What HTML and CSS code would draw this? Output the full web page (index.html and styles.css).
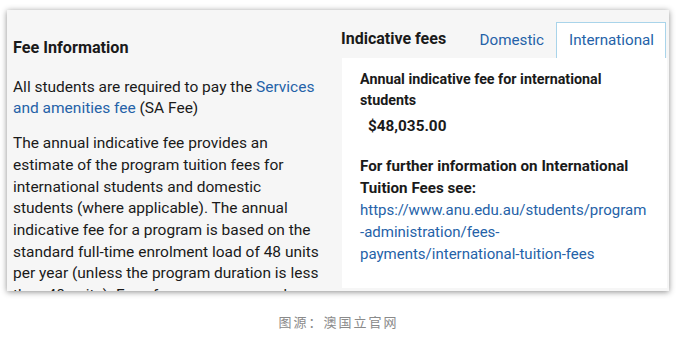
FILE: index.html
```html
<!DOCTYPE html>
<html lang="en">
<head>
    <meta charset="UTF-8">
    <meta name="viewport" content="width=device-width, initial-scale=1.0">
    <title>Fee Information</title>
    <link rel="stylesheet" href="styles.css">
</head>
<body>
    <div class="shot">
        <div class="fee-info">
            <h2>Fee Information</h2>
            <p>All students are required to pay the <a href="#">Services and amenities fee</a> (SA Fee)</p>
            <p>The annual indicative fee provides an estimate of the program tuition fees for international students and domestic students (where applicable). The annual indicative fee for a program is based on the standard full-time enrolment load of 48 units per year (unless the program duration is less than 48 units). Fees for your program where</p>
        </div>

        <div class="fees">
            <div class="tab-row">
                <h3>Indicative fees</h3>
                <div class="tabs">
                    <a href="#" class="tab">Domestic</a>
                    <a href="#" class="tab active">International</a>
                </div>
            </div>
            <div class="panel">
                <p class="label">Annual indicative fee for international students</p>
                <p class="amount">$48,035.00</p>
                <p class="label more">For further information on International Tuition Fees see:</p>
                <a href="#" class="url">https://www.anu.edu.au/students/program<br>-administration/fees-<br>payments/international-tuition-fees</a>
            </div>
        </div>
    </div>

    <p class="caption">图源：澳国立官网</p>
</body>
</html>
```

FILE: styles.css
```css
body {
    margin: 0;
    background-color: #fff;
    font-family: Roboto, "Liberation Sans", sans-serif;
    color: #1a1a1a;
}
a {
    color: #2562a8;
    text-decoration: none;
}
.shot {
    display: flex;
    width: 662px;
    height: 281px;
    margin: 10px 0 0 7px;
    background-color: #f6f6f6;
    box-shadow: 0 1px 6px rgba(0, 0, 0, 0.45);
    overflow: hidden;
}
.fee-info {
    flex: none;
    width: 306px;
    padding: 0 22px 0 6px;
    font-size: 15.5px;
    line-height: 21.7px;
}
.fee-info h2 {
    font-size: 16.2px;
    margin: 27px 0 18px;
}
.fee-info p {
    margin: 0 0 13px;
}
.fees {
    flex: 1;
    display: flex;
    flex-direction: column;
    margin: 12px 2px 3px 0;
}
.tab-row {
    display: flex;
    align-items: flex-end;
    justify-content: space-between;
}
.tab-row h3 {
    font-size: 16px;
    margin: 0 0 10px;
}
.tabs {
    display: flex;
    margin-right: 1px;
}
.tab {
    padding: 0 11px 0 12px;
    height: 35px;
    line-height: 34px;
    font-size: 15.2px;
    border: 1px solid transparent;
    border-bottom: none;
}
.tab.active {
    background-color: #fff;
    border-color: #a9d4ea;
}
.panel {
    flex: 1;
    background-color: #fff;
    margin-left: 1px;
    padding: 11px 18px 9px;
    font-size: 15px;
    line-height: 22px;
}
.panel p {
    margin: 0;
}
.label {
    font-weight: bold;
    font-size: 14.3px;
    line-height: 21px;
}
.amount {
    font-weight: bold;
    font-size: 15.3px;
    padding: 4px 8px 0;
}
.label.more {
    font-size: 15.2px;
    line-height: 22px;
    margin-top: 18px;
}
.caption {
    margin: 21px 0 0;
    text-align: center;
    font-family: "Noto Sans CJK SC", sans-serif;
    font-size: 13px;
    letter-spacing: 2px;
    color: #8a8a8a;
}
```
